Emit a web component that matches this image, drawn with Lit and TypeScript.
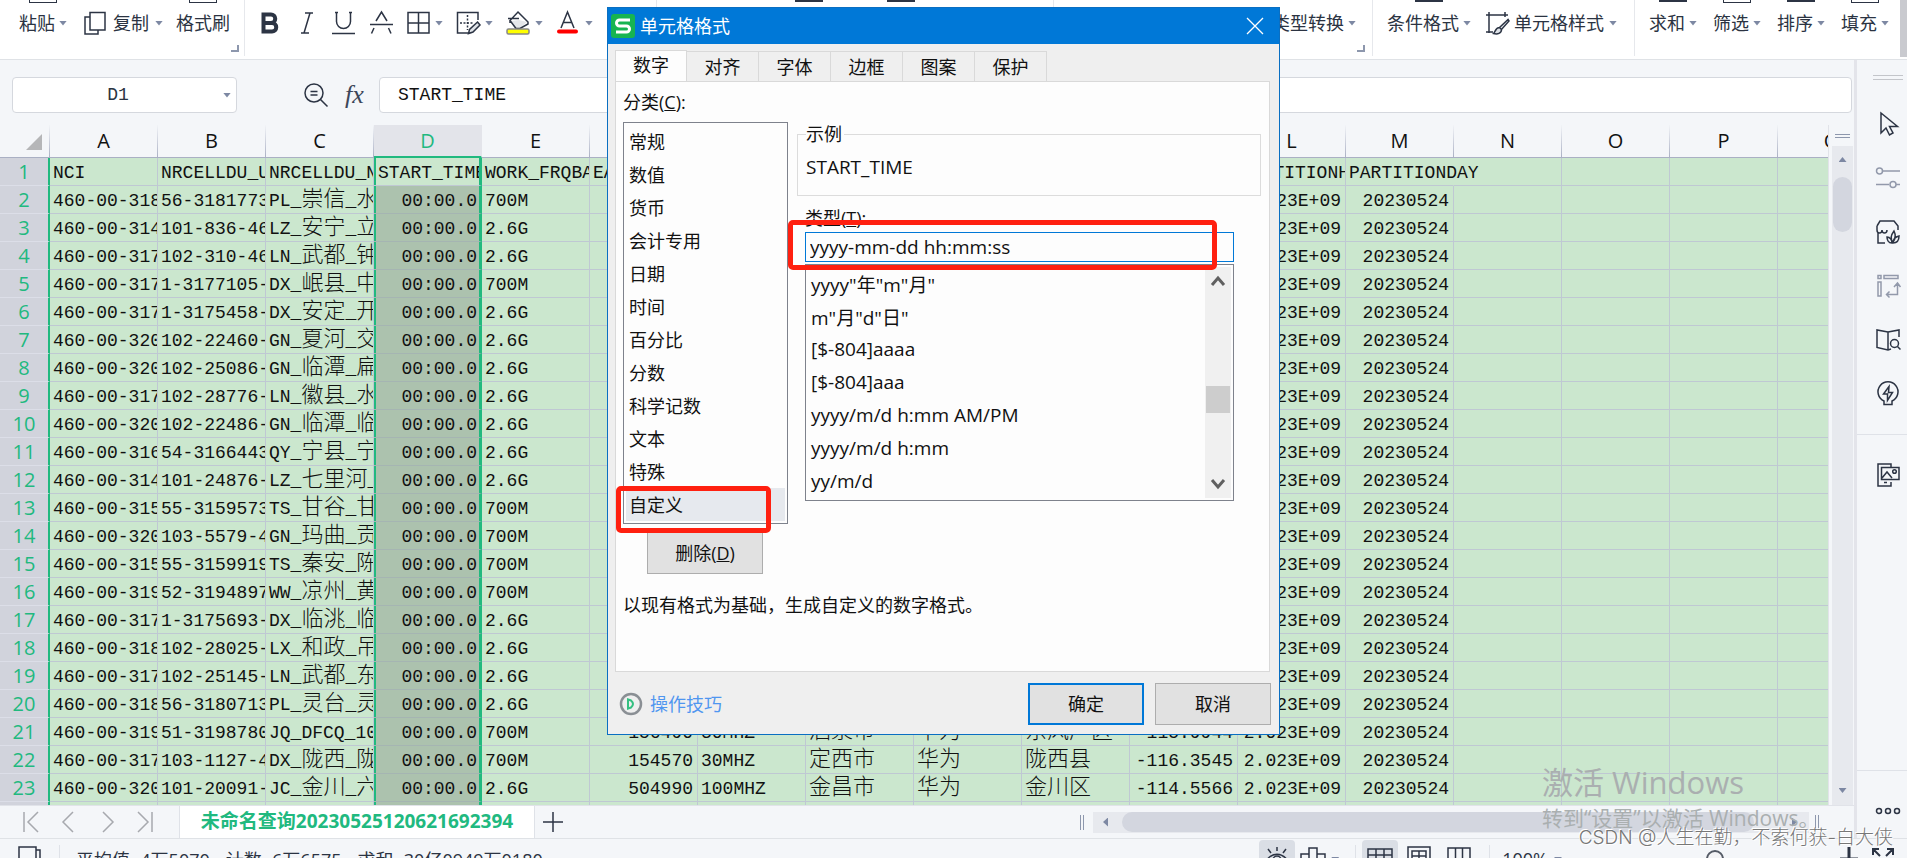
import { LitElement, html, css, svg, nothing } from "lit";
import { customElement, property } from "lit/decorators.js";
import { classMap } from "lit/directives/class-map.js";

const COLUMNS = "ABCDEFGHIJKLMNOPQ".split("");

const HEADINGS = [
  "NCI", "NRCELLDU_UID", "NRCELLDU_NAME", "START_TIME", "WORK_FRQBAND", "EARFCN",
  "", "", "", "", "", "PARTITIONHOUR", "PARTITIONDAY",
];

const RECORDS: string[][] = [
  ["460-00-318", "56-3181773", "PL_崇信_水", "700M"],
  ["460-00-314", "101-836-46", "LZ_安宁_立", "2.6G"],
  ["460-00-317", "102-310-46", "LN_武都_钟", "2.6G"],
  ["460-00-317", "1-3177105-", "DX_岷县_中", "700M"],
  ["460-00-317", "1-3175458-", "DX_安定_开", "2.6G"],
  ["460-00-320", "102-22460-", "GN_夏河_交", "2.6G"],
  ["460-00-320", "102-25086-", "GN_临潭_扁", "2.6G"],
  ["460-00-317", "102-28776-", "LN_徽县_水", "2.6G"],
  ["460-00-320", "102-22486-", "GN_临潭_临", "2.6G"],
  ["460-00-316", "54-3166443", "QY_宁县_宁", "2.6G"],
  ["460-00-314", "101-24876-", "LZ_七里河_", "2.6G"],
  ["460-00-315", "55-3159573", "TS_甘谷_甘", "700M"],
  ["460-00-320", "103-5579-4", "GN_玛曲_贡", "700M"],
  ["460-00-315", "55-3159919", "TS_秦安_陈", "700M"],
  ["460-00-319", "52-3194897", "WW_凉州_黄", "700M"],
  ["460-00-317", "1-3175693-", "DX_临洮_临", "2.6G"],
  ["460-00-318", "102-28025-", "LX_和政_吊", "2.6G"],
  ["460-00-317", "102-25145-", "LN_武都_东", "2.6G"],
  ["460-00-318", "56-3180713", "PL_灵台_灵", "2.6G"],
  ["460-00-319", "51-3198780", "JQ_DFCQ_10", "700M", "156490", "30MHZ", "酒泉市", "华为", "东风厂区", "-115.9944"],
  ["460-00-317", "103-1127-4", "DX_陇西_陇", "700M", "154570", "30MHZ", "定西市", "华为", "陇西县", "-116.3545"],
  ["460-00-320", "101-20091-", "JC_金川_六", "2.6G", "504990", "100MHZ", "金昌市", "华为", "金川区", "-114.5566"],
];

const RIGHT_ALIGNED = new Set([3, 5, 10, 11, 12]);

const CATEGORIES = [
  "常规", "数值", "货币", "会计专用", "日期", "时间",
  "百分比", "分数", "科学记数", "文本", "特殊", "自定义",
];

const FORMATS = [
  'yyyy"年"m"月"', 'm"月"d"日"', "[$-804]aaaa", "[$-804]aaa",
  "yyyy/m/d h:mm AM/PM", "yyyy/m/d h:mm", "yy/m/d",
];

const ICONS = {
  copy: svg`<path d="M7 6H2v17h13v-4"/><path d="M7 1.500h15v17.500H7z"/>`,
  bold: svg`<path stroke-width="4" d="M5.500 3.500h7.500a4 4 0 0 1 0 8.500h-7.500zM5.500 12h8.500a4 4 0 0 1 0 8.500h-8.500z"/>`,
  italic: svg`<path d="M10 2h8M6 22h8M15 2L9 22"/>`,
  underline: svg`<path d="M3 1.500h3M17 1.500h3M4.500 1.500v9a7 7 0 0 0 14 0v-9M0 22.500h23"/>`,
  strike: svg`<path d="M1 13.500h23M7 10l5.500-9 5.500 9M5 17l-2.500 5.500M19.500 17l2.500 5.500"/>`,
  borders: svg`<path d="M2 1.500h21v20.500H2zM12.500 1.500V22M2 12h21"/>`,
  erase: svg`<path d="M22 9V1.500H1.500v20.500H12"/><path d="M4 12h14M11.500 4v15" stroke-dasharray="2 1.500"/><path fill="#dfe3e8" d="M21.500 11l2.500 3-7 7-4.500 1.500 1-4z"/>`,
  fill: svg`<path fill="#e4e6ea" stroke="none" d="M5 10l8-1 8 2-7 6H9z"/><path d="M12 1l10 10v2l-8 4.500h-4L4 9.500zM2 7.500h11M4 9v3"/><rect x="1" y="18" width="22" height="5" rx="1.500" fill="#ff0" stroke="#888"/>`,
  fontColor: svg`<path d="M5 17l6.500-16L18 17M7.500 11.500h8"/><rect x="1" y="18.500" width="21" height="4" rx="2" fill="#f00" stroke="none"/>`,
  cellStyle: svg`<path d="M1 4h22M4 1v21M1 21h7M20 1v5"/><path fill="#dfe3e8" d="M23 8.500l-8.500 8 2 2L24 10zM14.500 16.500c-4 0-4 4-6 6 4 1 8 0 8-4z"/>`,
  find: svg`<circle cx="10" cy="10" r="9"/><path d="M16.500 16.500l7 7M6.500 8.500h7M6.500 12h7"/>`,
  cursor: svg`<path d="M5 1v20l5-5 3.500 7 3.500-2-3.500-6.500h8z"/>`,
  sliders: svg`<path d="M7 5h17M0 18.500h13M20 18.500h4"/><circle cx="3.500" cy="5" r="3"/><circle cx="17" cy="18.500" r="3"/>`,
  shop: svg`<path d="M2 12v11h7M1 6l3-5h14l4 5v4M1 6v4c0 4 5 4 5 0c0 4 5 4 5 0"/><path d="M17 22c-3-3-2-7 1-11 2 4 2 7-1 11zM16 23c-4 0-5-4-5-6 3 0 5 3 5 6zM17 23c4 0 6-3 6-7-4 1-6 4-6 7z"/>`,
  convert: svg`<path d="M2 1.500h3v3H2zM8 1.500h14v3H8zM2 8h3v14H2zM21.500 10v10.500H11M18 13l3.500-4 3 4M13.500 17.500l-3 3 3 3"/>`,
  book: svg`<path d="M12 4v18M12 4L1 2v17.500L12 22l3-1M12 4l11-2v7"/><circle cx="18.500" cy="15.500" r="4"/><path d="M21.500 18.500l3 3"/>`,
  idea: svg`<path d="M8 22.500v-3.500a10 10 0 1 1 8 0v3.500z"/><path d="M13 4.500L7.500 12h4v6.500l5-8h-4z"/>`,
  picture: svg`<path d="M15 4V1H2v22h13v-4"/><path d="M5.500 4.500H23v12H5.500zM6 15l5-6 5 6M8 19.500h3"/><circle cx="18.500" cy="8.500" r="1.800"/>`,
  more: svg`<circle cx="3" cy="12" r="2.500"/><circle cx="12" cy="12" r="2.500"/><circle cx="21" cy="12" r="2.500"/>`,
  plus: svg`<path d="M12 2v20M2 12h20"/>`,
  first: svg`<path d="M5 2v20M19 2L9 12l10 10"/>`,
  prev: svg`<path d="M16 2L6 12l10 10"/>`,
  next: svg`<path d="M8 2l10 10L8 22"/>`,
  last: svg`<path d="M5 2l10 10L5 22M19 2v20"/>`,
  macro: svg`<path d="M18 3V0H1v22h17zM18 3h4v19h-4"/>`,
  eye: svg`<path d="M1 14c6-9 16-9 22 0M12 0v4M3 2l3 4M21 2l-3 4"/><circle cx="12" cy="13" r="4"/>`,
  locate: svg`<path d="M8 7V1h8v6h8v9h-8v7H8v-7H0V7zM8 7v9M16 7v9"/>`,
  grid: svg`<path d="M0 2h24v20H0zM0 8h24M0 14h24M8 2v20M16 2v20"/>`,
  page: svg`<path d="M1 0h22v24H1zM5 4h14v16H5zM5 9h14M12 4v16"/>`,
  columns: svg`<path d="M1 1h22v22H1zM8.500 1v22M15.500 1v22"/>`,
  zoomIn: svg`<path stroke-width="3" d="M12 0v24M3 12h18"/>`,
  expand: svg`<path stroke-width="2" d="M2 8V2h6M2 2l7 7M22 8V2h-6M22 2l-7 7M2 16v6h6M22 16v6h-6"/>`,
  play: svg`<circle cx="12" cy="12" r="10" stroke="#8a8f94" stroke-width="2.500"/><path stroke="#35c081" stroke-width="2" d="M9 7.500v9l3-1q4-3.500 0-7z"/>`,
  close: svg`<path d="M4 4l16 16M20 4L4 20"/>`,
  up: svg`<path stroke-width="3" d="M6 15l6-7 6 7"/>`,
  down: svg`<path stroke-width="3" d="M6 9l6 7 6-7"/>`,
};
type IconName = keyof typeof ICONS;

const icon = (name: IconName, tone = "") =>
  html`<svg class="icon ${tone}" viewBox="0 0 24 24" aria-hidden="true">${ICONS[name]}</svg>`;

const base = css`
  * { box-sizing: border-box; }
  button, input, select {
    font: inherit; color: inherit; margin: 0; border: 0; padding: 0;
    background: none; border-radius: 0; outline: none;
  }
  .icon {
    width: 24px; height: 24px; flex: none; display: block; fill: none;
    stroke: #2c3444; stroke-width: 1.5; overflow: visible;
  }
  .icon.soft { stroke: #9299ab; }
  .caret {
    flex: none; width: 8px; height: 5px; background: #7d88a3;
    clip-path: polygon(0 0, 100% 0, 50% 100%);
  }
  .caret.up { clip-path: polygon(50% 0, 100% 100%, 0 100%); }
  .caret.left { width: 5px; height: 9px; clip-path: polygon(100% 0, 100% 100%, 0 50%); }
  .caret.right { width: 5px; height: 9px; clip-path: polygon(0 0, 100% 50%, 0 100%); }
`;

@customElement("ribbon-bar")
export class RibbonBar extends LitElement {
  static styles = [base, css`
    :host {
      display: flex; flex: none; height: 60px; background: #fff; overflow: hidden;
      border-bottom: 1px solid #dfe2e6; font-size: 18px; line-height: 24px; color: #2b3342;
    }
    .group { display: flex; align-items: flex-start; border-right: 1px solid #e6e8ec; height: 56px; flex: none; }
    .clip { padding: 0 14px 0 19px; width: 245px; }
    .font { padding-left: 13px; gap: 13px; width: 412px; }
    .align { width: 397px; justify-content: center; gap: 64px; }
    .number { flex: 1; justify-content: flex-end; padding-right: 7px; min-width: 0; }
    .style { padding-left: 14px; width: 262px; gap: 14px; }
    .edit { border: 0; padding: 0 11px 0 14px; gap: 16px; }
    .tool { display: grid; grid-template-rows: 4px 38px; justify-items: center; flex: none; white-space: nowrap; }
    .tool .face { display: flex; align-items: center; gap: 4px; }
    .tool.wide .face { gap: 6px; }
    .tool.mark .face { gap: 5px; }
    .stub { width: 28px; height: 3px; border: 1px solid #2c3444; border-top: 0; align-self: start; }
    .stub.solid { background: #2c3444; height: 2px; }
    .copy { margin: 0 13px 0 16px; }
    .corner { flex: none; align-self: flex-end; margin: 0 0 4px 1px; width: 8px; height: 7px; border: solid #8d97ad; border-width: 0 2px 2px 0; }
    .edge { flex: none; width: 7px; height: 57px; background: #c9cacf; }
  `];

  private tool(label: string, opts: { icon?: IconName; caret?: boolean; stub?: string; cls?: string; name?: string } = {}) {
    return html`<button class="tool ${opts.cls ?? ""}" aria-label=${opts.name ?? label}>
      ${opts.stub ? html`<span class="stub ${opts.stub}"></span>` : html`<span></span>`}
      <span class="face">${opts.icon ? icon(opts.icon) : nothing}${label}${opts.caret ? html`<i class="caret"></i>` : nothing}</span>
    </button>`;
  }

  render() {
    const mark = (i: IconName, name: string, caret = false) => this.tool("", { icon: i, caret, name, cls: "mark" });
    return html`
      <div class="group clip">
        ${this.tool("粘贴", { caret: true, stub: "line" })}
        ${this.tool("复制", { icon: "copy", caret: true, cls: "copy wide" })}
        ${this.tool("格式刷", { stub: "line" })}
        <i class="corner"></i>
      </div>
      <div class="group font">
        ${mark("bold", "加粗")}${mark("italic", "倾斜")}${mark("underline", "下划线")}${mark("strike", "删除线")}
        ${mark("borders", "边框", true)}${mark("erase", "绘图边框", true)}${mark("fill", "填充颜色", true)}${mark("fontColor", "字体颜色", true)}
      </div>
      <div class="group align"><i class="stub solid"></i><i class="stub solid"></i></div>
      <div class="group number">${this.tool("类型转换", { caret: true })}<i class="corner"></i></div>
      <div class="group style">
        ${this.tool("条件格式", { caret: true, stub: "solid" })}
        ${this.tool("单元格样式", { icon: "cellStyle", caret: true, cls: "mark" })}
      </div>
      <div class="group edit">
        ${this.tool("求和", { caret: true, stub: "solid" })}
        ${this.tool("筛选", { caret: true, stub: "line" })}
        ${this.tool("排序", { caret: true, stub: "solid" })}
        ${this.tool("填充", { caret: true, stub: "line" })}
      </div>
      <div class="edge"></div>`;
  }
}

@customElement("formula-bar")
export class FormulaBar extends LitElement {
  static styles = [base, css`
    :host { display: flex; flex: none; align-items: center; padding: 17px 2px 12px 12px; color: #2b3342; }
    .box { display: flex; align-items: center; height: 36px; background: #fff; border: 1px solid #d5d8de; border-radius: 4px; }
    .name { width: 225px; padding-right: 5px; }
    input { width: 100%; min-width: 0; font: 18px "Liberation Mono", monospace; }
    .name input { text-align: center; }
    .tools { display: flex; align-items: center; gap: 14px; margin: 0 12px 0 67px; }
    .fx { font: italic 26px/28px "Liberation Serif", serif; width: 25px; color: #3d465a; }
    .text { flex: 1; padding: 0 18px; color: #111; }
  `];
  render() {
    return html`
      <div class="box name"><input aria-label="名称框" value="D1"><i class="caret"></i></div>
      <div class="tools"><button aria-label="浏览公式">${icon("find")}</button><button class="fx">fx</button></div>
      <div class="box text"><input aria-label="编辑栏" value="START_TIME"></div>`;
  }
}

@customElement("sheet-grid")
export class SheetGrid extends LitElement {
  static styles = [base, css`
    :host { display: block; flex: 1; min-width: 0; overflow: hidden; background: #cbe7ce; border-right: 1px solid #e1e3e9; }
    table { border-collapse: separate; border-spacing: 0; table-layout: fixed; width: 1886px; }
    .gutter { width: 50px; }
    th { font-weight: 400; padding: 0; }
    thead th {
      height: 33px; font-size: 20px; line-height: 30px; color: #111; background: #f4f6f9;
      border-bottom: 1px solid #a9afc3; border-right: 1px solid;
      border-image: linear-gradient(#f4f6f9, #a9afc3) 1;
    }
    thead .picked { background: #e3e4ea; color: #21b97f; border-bottom: 2px solid #21b97f; border-image: none; border-right-color: #e3e4ea; }
    .all { width: 16px; height: 16px; margin: 2px 7px 0 auto; background: #b5b6b8; clip-path: polygon(100% 0, 100% 100%, 0 100%); }
    tbody th {
      height: 28px; font-size: 20px; line-height: 26px; color: #21b97f; background: #d1d3dc;
      border-right: 2px solid #21b97f; border-bottom: 1px solid #dcdee8;
    }
    td {
      height: 28px; padding: 3px 4px 0 3px; border: solid #bfc8d3; border-width: 0 1px 1px 0;
      font: 18px/24px "Liberation Mono", "Noto Sans CJK SC", monospace; color: #111;
      white-space: nowrap; overflow: hidden; text-align: left;
    }
    td.num { text-align: right; }
    td.spill { overflow: visible; border-right-color: transparent; }
    td.picked { border-right: 3px solid #21b97f; box-shadow: inset 2px 0 #21b97f; padding-right: 2px; padding-left: 4px; }
    td.shade { background: #acc2ae; border-bottom-color: #a5b5b2; }
    .han { font-size: 22px; font-weight: 300; line-height: 24px; }
  `];

  private text(value: string) {
    return value.split(/([\u4e00-\u9fff]+)/).filter(Boolean).map((part) =>
      /[\u4e00-\u9fff]/.test(part) ? html`<span class="han">${part}</span>` : part);
  }

  private row(index: number, values: string[]) {
    return html`<tr><th scope="row">${index}</th>${COLUMNS.map((_, c) => {
      const classes = {
        num: index > 1 && RIGHT_ALIGNED.has(c),
        picked: c === 3,
        shade: c === 3 && index > 1,
        spill: index === 1 && c === 12,
      };
      return html`<td class=${classMap(classes)}>${this.text(values[c] ?? "")}</td>`;
    })}</tr>`;
  }

  render() {
    return html`<table>
      <colgroup><col class="gutter">${COLUMNS.map(() => html`<col>`)}</colgroup>
      <thead><tr><th><div class="all"></div></th>${COLUMNS.map((c) => html`<th scope="col" class=${classMap({ picked: c === "D" })}>${c}</th>`)}</tr></thead>
      <tbody>
        ${this.row(1, HEADINGS)}
        ${RECORDS.map((r, i) => this.row(i + 2, [
          r[0], r[1], r[2], "00:00.0", r[3], ...Array.from({ length: 6 }, (_, k) => r[k + 4] ?? ""), "2.023E+09", "20230524",
        ]))}
        ${this.row(24, ["", "", "", ""])}
      </tbody>
    </table>`;
  }
}

@customElement("sheet-footer")
export class SheetFooter extends LitElement {
  static styles = [base, css`
    :host { display: flex; flex: none; align-items: center; height: 33px; background: #f4f6f9; border-top: 1px solid #e1e3e9; padding-right: 35px; }
    .nav { display: flex; gap: 14px; padding: 0 14px 0 19px; width: 179px; }
    .tab { height: 32px; width: 356px; padding-bottom: 2px; background: #fff; border: solid #dfe2e8; border-width: 0 1px; color: #21b97f; font-weight: 700; font-size: 19px; line-height: 28px; }
    .add { margin: 0 auto 0 6px; }
    .icon.faint { stroke: #a7a9ae; }
    .grip { width: 4px; height: 15px; border: solid #8d97ad; border-width: 0 1px; }
    .track { display: flex; align-items: center; justify-content: space-between; gap: 14px; width: 716px; height: 21px; margin: 0 6px 0 9px; padding: 0 12px 0 10px; background: #e7e9ee; }
    .thumb { flex: 1; height: 20px; margin-right: 24px; border-radius: 10px; background: #d3d6df; }
  `];
  render() {
    return html`
      <div class="nav">${(["first", "prev", "next", "last"] as IconName[]).map((n) => html`<button aria-label=${n}>${icon(n, "faint")}</button>`)}</div>
      <button class="tab">未命名查询20230525120621692394</button>
      <button class="add" aria-label="新建工作表">${icon("plus")}</button>
      <i class="grip"></i>
      <div class="track"><i class="caret left"></i><div class="thumb"></div><i class="caret right"></i></div>
      <i class="grip"></i>`;
  }
}

@customElement("status-bar")
export class StatusBar extends LitElement {
  static styles = [base, css`
    :host { display: block; flex: none; height: 20px; overflow: hidden; background: #f4f6f9; border-top: 1px solid #dfe2e6; font-size: 18px; color: #2b3342; }
    .line { display: flex; align-items: center; height: 40px; padding: 0 12px 0 18px; }
    .rule { width: 1px; height: 28px; background: #dfe2e8; }
    .stats { display: flex; gap: 16px; margin-left: 16px; white-space: pre; }
    .rule.a { margin-left: 17px; }
    .views { display: flex; align-items: center; margin-left: auto; gap: 6px; }
    .on { padding: 6px; height: 38px; width: 36px; border-radius: 4px; background: #dadee5; }
    .dash { width: 8px; height: 4px; background: #7d88a3; clip-path: polygon(0 0, 100% 0, 50% 100%); margin-right: 10px; }
    .page { margin: 0 10px 0 3px; }
    .rule.b { margin: 0 6px 0 12px; }
    .minus { width: 15px; height: 2px; background: #8d97ad; }
    .zoom { appearance: none; width: 216px; height: 18px; margin: 0 8px; background: linear-gradient(#b9bec9, #b9bec9) center / 100% 2px no-repeat; }
    .zoom::-webkit-slider-thumb { appearance: none; width: 18px; height: 18px; border-radius: 50%; border: 2px solid #555b66; background: #f4f4f6; }
    .full { margin-left: 4px; }
  `];
  render() {
    return html`<div class="line">
      <button aria-label="宏">${icon("macro")}</button><i class="rule a"></i>
      <div class="stats"><span>平均值=4万5070</span><span>计数=6万6575</span><span>求和=30亿0949万0180</span></div>
      <div class="views">
        <button class="on" aria-label="护眼模式">${icon("eye")}</button>
        <button aria-label="阅读模式">${icon("locate")}</button><i class="dash"></i><i class="rule"></i>
        <button class="on" aria-label="普通视图">${icon("grid")}</button>
        <button class="page" aria-label="页面布局">${icon("page")}</button>
        <button aria-label="分页预览">${icon("columns")}</button><i class="rule b"></i>
        <span>100%</span><i class="dash"></i><i class="minus"></i>
        <input class="zoom" type="range" min="0" max="100" value="50" aria-label="显示比例">
        <button aria-label="放大">${icon("zoomIn")}</button>
        <button class="full" aria-label="全屏">${icon("expand")}</button>
      </div>
    </div>`;
  }
}

@customElement("side-panel")
export class SidePanel extends LitElement {
  static styles = [base, css`
    :host { display: flex; flex-direction: column; align-items: center; width: 53px; flex: none; background: #f4f6f9; border-left: 3px solid #e3e4ea; padding: 15px 0 15px 12px; }
    .grip { width: 30px; height: 5px; border: solid #c3c5ca; border-width: 1px 0; margin-bottom: 32px; }
    .tools { display: flex; flex-direction: column; gap: 30px; }
    hr { width: 50px; margin: 28px 0 28px -12px; border: 0; border-top: 1px solid #dfe2e8; flex: none; }
    .low { margin-top: auto; }
  `];
  render() {
    const items: [IconName, string, string][] = [
      ["cursor", "选择", ""], ["sliders", "属性", "soft"], ["shop", "素材", ""],
      ["convert", "智能工具", "soft"], ["book", "帮助", ""], ["idea", "灵感", ""],
    ];
    return html`
      <i class="grip"></i>
      <div class="tools">${items.map(([n, label, tone]) => html`<button aria-label=${label}>${icon(n, tone)}</button>`)}</div>
      <hr>
      <button aria-label="图片">${icon("picture")}</button>
      <hr class="low">
      <button aria-label="更多">${icon("more")}</button>`;
  }
}

@customElement("format-dialog")
export class FormatDialog extends LitElement {
  @property({ type: Number }) category = 11;

  static styles = [base, css`
    :host {
      display: flex; flex-direction: column; width: 673px; background: #efefef; border: 1px solid #0a6fc2;
      font-size: 18px; line-height: 24px; color: #111;
    }
    .title { display: flex; align-items: center; gap: 5px; height: 36px; padding: 0 12px 0 3px; background: #0078d7; color: #fff; }
    .title h2 { flex: 1; font: inherit; margin: 0; }
    .title .icon { stroke: #fff; stroke-width: 1.3; }
    .logo { width: 24px; height: 24px; }
    .tabs { display: flex; align-items: flex-end; padding: 6px 7px 0; }
    .tabs button { width: 72px; height: 30px; border: 1px solid #d9d9d9; border-width: 1px 1px 0 0; }
    .tabs .active { height: 32px; margin-bottom: -1px; padding-bottom: 3px; border-left-width: 1px; background: #fdfdfd; }
    .page { margin: 0 9px 0 7px; height: 591px; padding: 4px 8px 0 7px; background: #fdfdfd; border: 1px solid #d9d9d9; }
    .label { display: block; height: 36px; line-height: 32px; }
    .cols { display: grid; grid-template-columns: 165px 1fr; gap: 9px; }
    select { appearance: none; display: block; overflow: hidden; background: #fdfdfd; }
    option { height: 33px; min-height: 33px; padding: 3px 4px; line-height: 24px; display: block; color: #111; }
    .cats { width: 165px; height: 402px; border: 1px solid #7e828c; padding: 2px; }
    .cats option { padding-left: 3px; }
    .cats option:checked { background: #e6e9ee linear-gradient(#e6e9ee, #e6e9ee); color: #111; }
    .push { display: block; width: 116px; height: 42px; background: #e1e1e1; border: 1px solid #adadad; }
    .delete { margin: 8px 0 0 24px; }
    fieldset { margin: 0; padding: 9px 8px 0; height: 74px; border: 1px solid #dcdcdc; min-width: 0; }
    legend { padding: 0 2px 0 0; }
    .sample, .type input, .formats { font-size: 19px; }
    .type { margin: 8px 27px 0 8px; }
    .type label { display: block; line-height: 28px; }
    .type input { width: 100%; height: 30px; border: 1px solid #0078d7; padding-left: 4px; display: block; background: #fdfdfd; }
    .formats { display: flex; margin-top: 2px; border: 1px solid #7e828c; padding: 2px; }
    .formats select { flex: 1; height: 231px; }
    .formats option { padding-left: 3px; }
    .scroll { display: flex; flex-direction: column; align-items: center; width: 26px; background: #f0f0f0; padding: 3px 0; }
    .scroll .icon { stroke: #606060; }
    .scroll button { padding: 0 1px; }
    .thumb { width: 24px; height: 27px; background: #cdcdcd; margin: 92px 0 auto; }
    .note { margin: 19px 0 0; }
    .foot { display: flex; align-items: center; gap: 11px; padding: 11px 8px 9px 11px; }
    .foot a { display: flex; align-items: center; gap: 7px; margin-right: auto; color: #4f96f0; text-decoration: none; }
    .ok { border: 2px solid #0078d7; }
    .mark { position: absolute; border: 5px solid #ff2010; border-radius: 5px; pointer-events: none; }
    .mark.type-mark { left: 180px; top: 212px; width: 429px; height: 50px; }
    .mark.cat-mark { left: 8px; top: 478px; width: 155px; height: 47px; }
  `];

  render() {
    return html`
      <header class="title">
        <svg class="logo" viewBox="0 0 24 24" aria-hidden="true"><rect width="24" height="24" rx="3" fill="#17b451"/><path fill="none" stroke="#fff" stroke-width="3" d="M19 6H8.500a3 3 0 0 0 0 6h7a3 3 0 0 1 0 6H5"/></svg>
        <h2>单元格格式</h2>
        <button aria-label="关闭">${icon("close")}</button>
      </header>
      <div class="tabs" role="tablist">
        ${["数字", "对齐", "字体", "边框", "图案", "保护"].map((t, i) => html`<button role="tab" class=${classMap({ active: i === 0 })}>${t}</button>`)}
      </div>
      <section class="page">
        <label class="label" for="cats">分类(<u>C</u>):</label>
        <div class="cols">
          <div>
            <select class="cats" id="cats" size="12">${CATEGORIES.map((c, i) => html`<option ?selected=${i === this.category}>${c}</option>`)}</select>
            <button class="push delete">删除(<u>D</u>)</button>
          </div>
          <div>
            <fieldset><legend>示例</legend><span class="sample">START_TIME</span></fieldset>
            <div class="type">
              <label for="type">类型(<u>T</u>):</label>
              <input id="type" value="yyyy-mm-dd hh:mm:ss">
              <div class="formats">
                <select size="7" aria-label="格式列表">${FORMATS.map((f) => html`<option>${f}</option>`)}</select>
                <div class="scroll"><button aria-label="向上">${icon("up")}</button><div class="thumb"></div><button aria-label="向下">${icon("down")}</button></div>
              </div>
            </div>
          </div>
        </div>
        <p class="note">以现有格式为基础，生成自定义的数字格式。</p>
      </section>
      <footer class="foot">
        <a href="#tips">${icon("play")}操作技巧</a>
        <button class="push ok">确定</button>
        <button class="push">取消</button>
      </footer>
      <div class="mark type-mark"></div>
      <div class="mark cat-mark"></div>`;
  }
}

@customElement("app-root")
export class AppRoot extends LitElement {
  static styles = [base, css`
    :host {
      display: flex; flex-direction: column; position: relative; height: 100vh; overflow: hidden;
      background: #f4f6f9; font-family: "Open Sans", "Noto Sans CJK SC", sans-serif;
    }
    .work { display: flex; flex: 1; min-height: 0; }
    .book { display: flex; flex-direction: column; flex: 1; min-width: 0; }
    .sheet { display: flex; flex: 1; min-height: 0; }
    .vbar { display: flex; flex-direction: column; width: 25px; padding: 0 1px 0 3px; flex: none; }
    .split { height: 4px; width: 15px; margin: 9px auto 8px; border: solid #8d97ad; border-width: 1px 0; }
    .track { flex: 1; display: flex; flex-direction: column; align-items: center; padding: 11px 1px 12px; background: #e7e9ee; }
    .thumb { width: 19px; height: 55px; margin: 15px 0 auto; border-radius: 10px; background: #d3d6df; }
    .dialog { position: absolute; left: 607px; top: 7px; }
    .activate { position: absolute; right: 80px; bottom: 25px; width: 285px; color: #aaafb0; pointer-events: none; white-space: nowrap; }
    .activate p { margin: 0; font-size: 21px; line-height: 30px; }
    .activate .big { font-size: 31px; line-height: 42px; }
    .credit { position: absolute; right: 14px; bottom: 7px; margin: 0; font: 300 19px/26px "Inter", "Noto Sans CJK SC", sans-serif; color: #777; text-shadow: 1px 1px #fff, -1px -1px #fff; white-space: nowrap; }
  `];
  render() {
    return html`
      <ribbon-bar></ribbon-bar>
      <div class="work">
        <div class="book">
          <formula-bar></formula-bar>
          <div class="sheet">
            <sheet-grid></sheet-grid>
            <div class="vbar"><i class="split"></i><div class="track"><i class="caret up"></i><div class="thumb"></div><i class="caret"></i></div></div>
          </div>
          <sheet-footer></sheet-footer>
        </div>
        <side-panel></side-panel>
      </div>
      <status-bar></status-bar>
      <format-dialog class="dialog"></format-dialog>
      <div class="activate"><p class="big">激活 Windows</p><p>转到“设置”以激活 Windows。</p></div>
      <p class="credit">CSDN @人生在勤，不索何获-白大侠</p>`;
  }
}
